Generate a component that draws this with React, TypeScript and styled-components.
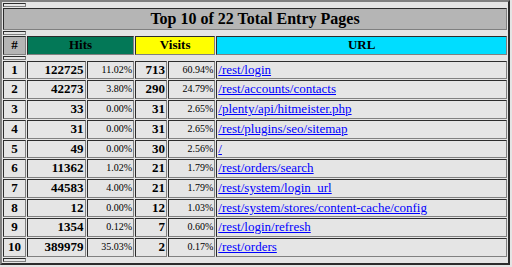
import React from 'react';
import styled, { createGlobalStyle } from 'styled-components';

const GlobalStyle = createGlobalStyle`
  body {
    margin: 0;
    background: #e5e5e5;
    font-family: "Liberation Serif", "Times New Roman", serif;
    color: #000;
  }
`;

const Table = styled.table`
  width: 510px;
  border-collapse: separate;
  border-spacing: 1px;
  border: 2px outset grey;
  font-family: "Liberation Serif", "Times New Roman", serif;
  font-size: 13px;
  line-height: 14.7px;
`;

const Cell = styled.td<{ $align?: 'left' | 'right' | 'center'; $small?: boolean }>`
  border: 1px inset grey;
  padding: 1px;
  text-align: ${props => props.$align || 'left'};
  font-size: ${props => (props.$small ? '10px' : '13px')};
  font-weight: ${props => (props.$small ? 'normal' : 'bold')};
  white-space: nowrap;
`;

const UrlCell = styled.td`
  border: 1px inset grey;
  padding: 1px 2px 1px 1px;
  text-align: left;
  font-size: 13px;
  white-space: nowrap;
`;

const Spacer = styled.th`
  height: 2px;
  padding: 0;
  border: 1px inset grey;
  font-size: 0;
  line-height: 0;
`;

const Title = styled.th`
  border: 1px inset grey;
  padding: 1px;
  background: #b5b5b5;
  font-size: 16px;
  line-height: 18px;
  font-weight: bold;
`;

const Head = styled.th<{ $bg: string }>`
  border: 1px inset grey;
  padding: 1px;
  background: ${props => props.$bg};
  font-size: 13px;
  line-height: 14.7px;
  font-weight: bold;
`;

const Link = styled.a`
  color: #0000ff;
  text-decoration: underline;
`;

const rows: [number, number, string, number, string, string][] = [
  [1, 122725, '11.02%', 713, '60.94%', '/rest/login'],
  [2, 42273, '3.80%', 290, '24.79%', '/rest/accounts/contacts'],
  [3, 33, '0.00%', 31, '2.65%', '/plenty/api/hitmeister.php'],
  [4, 31, '0.00%', 31, '2.65%', '/rest/plugins/seo/sitemap'],
  [5, 49, '0.00%', 30, '2.56%', '/'],
  [6, 11362, '1.02%', 21, '1.79%', '/rest/orders/search'],
  [7, 44583, '4.00%', 21, '1.79%', '/rest/system/login_url'],
  [8, 12, '0.00%', 12, '1.03%', '/rest/system/stores/content-cache/config'],
  [9, 1354, '0.12%', 7, '0.60%', '/rest/login/refresh'],
  [10, 389979, '35.03%', 2, '0.17%', '/rest/orders'],
];

const App: React.FC = () => {
  return (
    <>
      <GlobalStyle />
      <Table>
        <tbody>
          <tr><Spacer /></tr>
          <tr>
            <Title colSpan={6}>Top 10 of 22 Total Entry Pages</Title>
          </tr>
          <tr><Spacer /></tr>
          <tr>
            <Head $bg="#b5b5b5">#</Head>
            <Head $bg="#037857" colSpan={2}>Hits</Head>
            <Head $bg="#ffff00" colSpan={2}>Visits</Head>
            <Head $bg="#00ddff">URL</Head>
          </tr>
          <tr><Spacer /></tr>
          {rows.map(([n, hits, hitsPct, visits, visitsPct, url]) => (
            <tr key={n}>
              <Cell $align="center">{n}</Cell>
              <Cell $align="right">{hits}</Cell>
              <Cell $align="right" $small>{hitsPct}</Cell>
              <Cell $align="right">{visits}</Cell>
              <Cell $align="right" $small>{visitsPct}</Cell>
              <UrlCell><Link href="#">{url}</Link></UrlCell>
            </tr>
          ))}
          <tr><Spacer /></tr>
        </tbody>
      </Table>
    </>
  );
};

export default App;
